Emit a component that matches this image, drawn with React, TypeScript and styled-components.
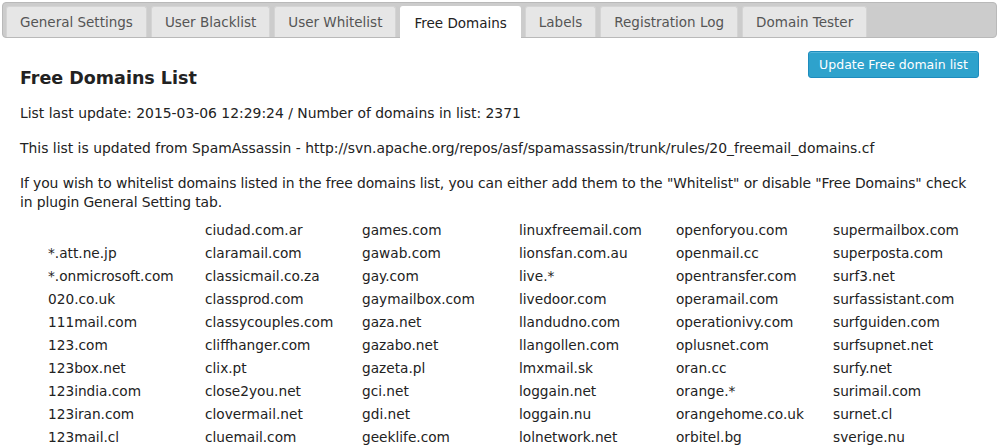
import React from "react";
import styled, { createGlobalStyle } from "styled-components";

const Global = createGlobalStyle`
  html, body { margin: 0; padding: 0; background: #fff; }
  body { font-family: "DejaVu Sans", Verdana, sans-serif; font-size: 13px; color: #222; }
  * { box-sizing: border-box; }
`;

const Page = styled.div`
  width: 1000px;
  height: 445px;
  overflow: hidden;
  background: #fff;
`;

const TabBar = styled.div`
  margin: 2px 3px 0 2px;
  height: 36px;
  background: #cccccc;
  border: 1px solid #b9b9b9;
  border-radius: 4px;
  padding: 3px 4px 0 3px;
  display: flex;
  align-items: flex-end;
  gap: 4px;
`;

const Tab = styled.div<{ $active?: boolean }>`
  height: ${(p) => (p.$active ? "33px" : "31px")};
  margin-bottom: ${(p) => (p.$active ? "-2px" : "0")};
  padding: 0 13px;
  display: flex;
  align-items: center;
  background: ${(p) => (p.$active ? "#fff" : "#e6e6e6")};
  border: 1px solid ${(p) => (p.$active ? "#fff" : "#d4d4d4")};
  border-bottom: none;
  border-radius: 3px 3px 0 0;
  color: ${(p) => (p.$active ? "#222" : "#555")};
  font-size: 13.5px;
  white-space: nowrap;
`;

const Content = styled.div`
  padding: 0 20px;
`;

const HeaderRow = styled.div`
  display: flex;
  justify-content: space-between;
  align-items: flex-start;
  height: 66px;
  padding-top: 13px;
  padding-right: 1px;
`;

const Title = styled.h2`
  margin: 17px 0 0;
  font-size: 17.5px;
  font-weight: bold;
  color: #222;
  line-height: 20px;
`;

const Button = styled.button`
  font-family: inherit;
  font-size: 12.5px;
  color: #fff;
  background: #2ea2cc;
  border: 1px solid #1e8cbe;
  border-radius: 3px;
  height: 27px;
  padding: 0 10px;
  box-shadow: inset 0 1px 0 rgba(120, 200, 230, 0.5);
`;

const Paras = styled.div`
  display: flex;
  flex-direction: column;
  gap: 16px;
  margin-right: 10px;
`;

const Para = styled.p<{ $tight?: boolean }>`
  margin: 0;
  font-size: 13.9px;
  line-height: 19px;
  letter-spacing: ${(p) => (p.$tight ? "-0.1px" : "0")};
  color: #222;
`;

const Grid = styled.div`
  display: grid;
  grid-template-columns: repeat(6, 157px);
  grid-auto-rows: 23px;
  margin-left: 28px;
  margin-top: 6px;
  align-items: center;
  font-size: 13.7px;
  color: #222;
`;

const Cell = styled.div`
  white-space: nowrap;
`;

const tabs = [
  "General Settings",
  "User Blacklist",
  "User Whitelist",
  "Free Domains",
  "Labels",
  "Registration Log",
  "Domain Tester",
];

const columns = [
  ["", "*.att.ne.jp", "*.onmicrosoft.com", "020.co.uk", "111mail.com", "123.com", "123box.net", "123india.com", "123iran.com", "123mail.cl"],
  ["ciudad.com.ar", "claramail.com", "classicmail.co.za", "classprod.com", "classycouples.com", "cliffhanger.com", "clix.pt", "close2you.net", "clovermail.net", "cluemail.com"],
  ["games.com", "gawab.com", "gay.com", "gaymailbox.com", "gaza.net", "gazabo.net", "gazeta.pl", "gci.net", "gdi.net", "geeklife.com"],
  ["linuxfreemail.com", "lionsfan.com.au", "live.*", "livedoor.com", "llandudno.com", "llangollen.com", "lmxmail.sk", "loggain.net", "loggain.nu", "lolnetwork.net"],
  ["openforyou.com", "openmail.cc", "opentransfer.com", "operamail.com", "operationivy.com", "oplusnet.com", "oran.cc", "orange.*", "orangehome.co.uk", "orbitel.bg"],
  ["supermailbox.com", "superposta.com", "surf3.net", "surfassistant.com", "surfguiden.com", "surfsupnet.net", "surfy.net", "surimail.com", "surnet.cl", "sverige.nu"],
];

export default function App() {
  const rows = columns[0].map((_, r) => columns.map((c) => c[r]));
  return (
    <Page>
      <Global />
      <TabBar>
        {tabs.map((t) => (
          <Tab key={t} $active={t === "Free Domains"}>
            {t}
          </Tab>
        ))}
      </TabBar>
      <Content>
        <HeaderRow>
          <Title>Free Domains List</Title>
          <Button>Update Free domain list</Button>
        </HeaderRow>
        <Paras>
          <Para>List last update: 2015-03-06 12:29:24 / Number of domains in list: 2371</Para>
          <Para>
            This list is updated from SpamAssassin - http://svn.apache.org/repos/asf/spamassassin/trunk/rules/20_freemail_domains.cf
          </Para>
          <Para $tight>
            If you wish to whitelist domains listed in the free domains list, you can either add them to the "Whitelist" or
            disable "Free Domains" check in plugin General Setting tab.
          </Para>
        </Paras>
        <Grid>
          {rows.flat().map((d, i) => (
            <Cell key={i}>{d}</Cell>
          ))}
        </Grid>
      </Content>
    </Page>
  );
}
